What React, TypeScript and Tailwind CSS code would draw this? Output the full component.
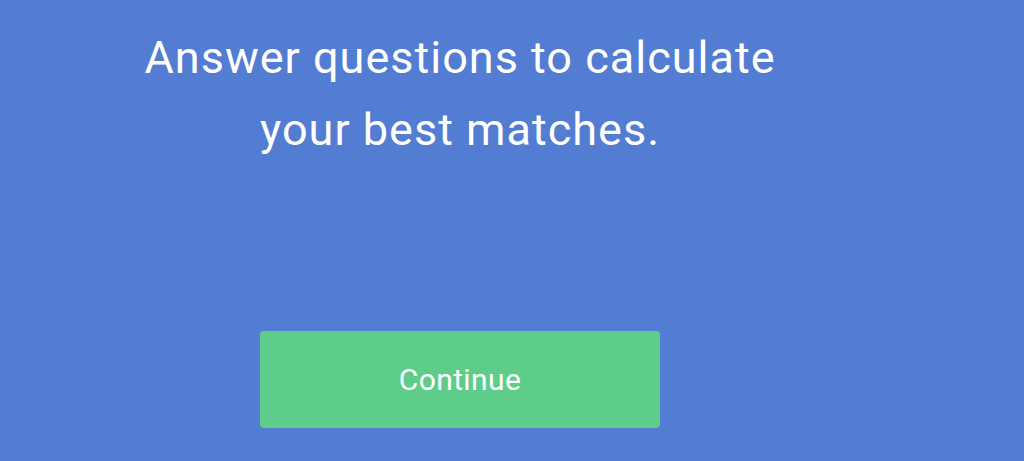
export default function App() {
  return (
    <div className="h-[461px] w-full overflow-hidden bg-[#537cd3] font-['Roboto',sans-serif] text-white">
      <div className="ml-[140px] flex w-[640px] flex-col items-center pt-[22px]">
        <h1 className="text-center text-[45px] font-normal leading-[72px] tracking-[1px]">
          Answer questions to calculate
          <br />
          your best matches.
        </h1>
        <button className="mt-[165px] flex h-[97px] w-[400px] items-center justify-center rounded-[4px] bg-[#5ecd89] text-[30px] tracking-[0.4px] text-white">
          Continue
        </button>
      </div>
    </div>
  );
}
